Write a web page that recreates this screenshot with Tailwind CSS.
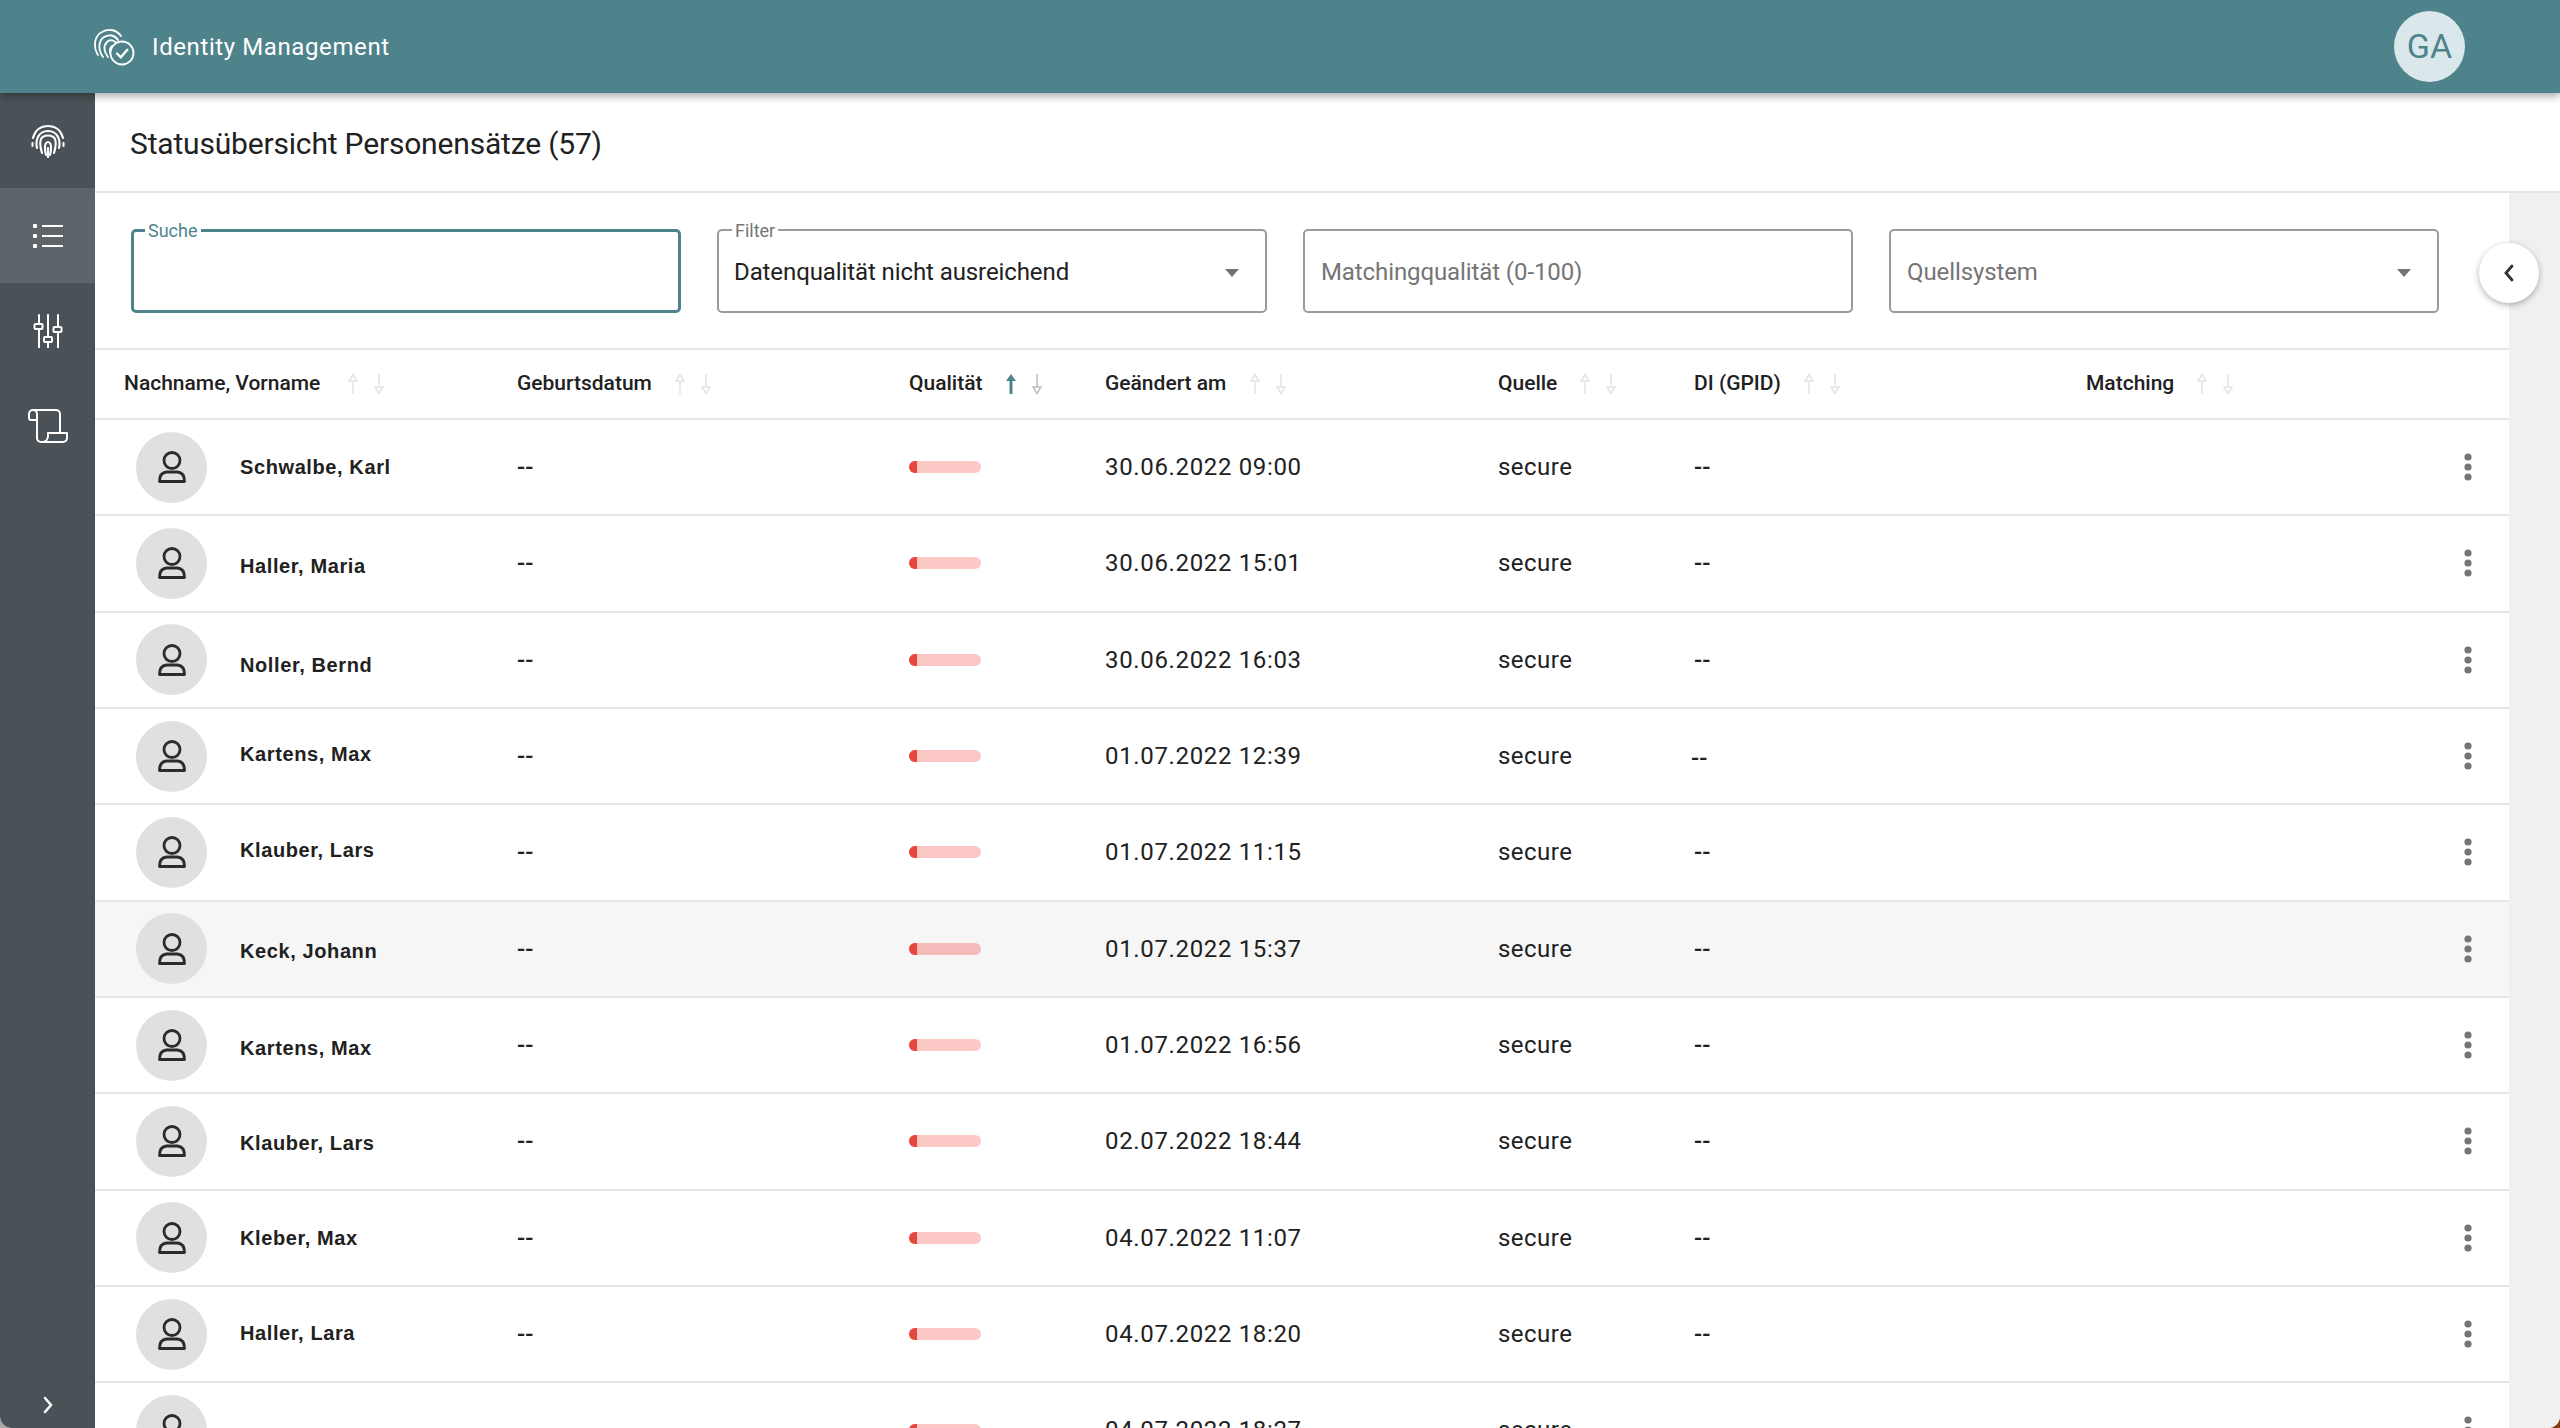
<!DOCTYPE html>
<html lang="de">
<head>
    <meta charset="UTF-8">
    <meta name="viewport" content="width=device-width, initial-scale=1.0">
    <title>Identity Management</title>
    <script src="https://cdn.jsdelivr.net/npm/@tailwindcss/browser@4"></script>
</head>
<body class="h-[1428px] w-[2560px] overflow-hidden bg-[linear-gradient(to_right,#a8a8a8_50%,#8a3a10_50%)] font-['Roboto',sans-serif] text-[#212121]">
<div class="h-[1428px] overflow-hidden rounded-b-[12px] bg-white">
    <!-- Top bar -->
    <header class="relative z-20 flex h-[93px] items-center justify-between bg-[#4f838c] pl-[93px] pr-[95px] shadow-[0_3px_8px_rgba(0,0,0,0.35)]">
        <div class="flex items-center gap-[15px]">
            <svg width="44" height="38" viewBox="0 0 44 38" fill="none" stroke="white" stroke-width="1.8" stroke-linecap="round">
                <path d="M5 27C0 19 1 8 9 4c7-4 15-2 19 4"/>
                <path d="M10 29C5 22 5 13 11 9c5-3 11-2 14 3"/>
                <path d="M15 29c-4-5-5-11-1-15 3-3 8-2 10 2"/>
                <path d="M20 29c-3-3-4-7-2-10 1-2 4-1 5 1"/>
                <circle cx="29" cy="25" r="11.5" fill="#4f838c"/>
                <path d="M24 25.5l3.8 3.8 6.5-7.5" stroke-width="2.4"/>
            </svg>
            <span class="text-[24px] leading-none tracking-[0.025em] text-white">Identity Management</span>
        </div>
        <div class="flex h-[71px] w-[71px] items-center justify-center rounded-full bg-[#dae8ec] text-[34px] text-[#4f838c]">GA</div>
    </header>

    <div class="flex h-[1335px]">
        <!-- Sidebar -->
        <nav class="relative flex w-[95px] shrink-0 flex-col bg-[#4b5257] text-white">
            <a class="flex h-[95px] items-center justify-center">
                <svg width="34" height="34" viewBox="0 0 34 34" fill="none" stroke="white" stroke-width="2.1" stroke-linecap="round">
                    <path d="M2 14C4 6 10 2 17 2s13 4 15 12"/>
                    <path d="M1.500 19v3M32.500 19v3"/>
                    <path d="M6 24c-1-4-1-7 1-11 2-4 6-6 10-6s8 2 10 6c2 4 2 7 1 11"/>
                    <path d="M11 29c-1.500-5-2.500-10-1-14 1-2 4-3.500 7-3.500s6 1.500 7 3.500c1.500 4 .5 9-1 14"/>
                    <path d="M15 31c-1-4-1.500-8-.5-11 .5-1 1.500-2 2.500-2s2 1 2.500 2c1 3 .5 7-.5 11"/>
                    <path d="M17 33V24"/>
                </svg>
            </a>
            <a class="flex h-[95px] items-center justify-center bg-[#5e656a]">
                <svg width="32" height="26" viewBox="0 0 32 26" fill="none" stroke="white" stroke-width="2">
                    <rect x="1" y="1" width="4" height="4" rx="1" fill="white" stroke="none"/>
                    <rect x="1" y="11" width="4" height="4" rx="1" fill="white" stroke="none"/>
                    <rect x="1" y="21" width="4" height="4" rx="1" fill="white" stroke="none"/>
                    <path d="M10 3h21M10 13h21M10 23h21"/>
                </svg>
            </a>
            <a class="flex h-[95px] items-center justify-center">
                <svg width="30" height="34" viewBox="0 0 30 34" fill="none" stroke="white" stroke-width="2" stroke-linecap="round">
                    <path d="M6 1v33M15 1v33M25 1v33" />
                    <rect x="1.500" y="10" width="8" height="5" rx="1" fill="#4b5257"/>
                    <rect x="11" y="23" width="8" height="5" rx="1" fill="#4b5257"/>
                    <rect x="20.500" y="13" width="8" height="5" rx="1" fill="#4b5257"/>
                </svg>
            </a>
            <a class="flex h-[95px] items-center justify-center">
                <svg width="40" height="34" viewBox="0 0 40 34" fill="none" stroke="white" stroke-width="2" stroke-linejoin="round">
                    <path d="M10 11H3a2 2 0 0 1-2-2V5a4 4 0 0 1 4-4h23a4 4 0 0 1 4 4v19"/>
                    <path d="M5 1a4 4 0 0 1 4 4v24a4 4 0 0 0 4 4h22a4 4 0 0 0 4-4v-5H20v3a6 6 0 0 1-5 6"/>
                </svg>
            </a>
            <svg class="absolute bottom-[14px] left-[43px]" width="10" height="18" viewBox="0 0 10 18" fill="none" stroke="white" stroke-width="2.5" stroke-linecap="round">
                <path d="M2 2l6 7-6 7"/>
            </svg>
        </nav>

        <main class="min-w-0 flex-1">
            <div class="flex h-[100px] items-center border-b-2 border-[#e6e6e6] pl-[35px] pt-[4px]">
                <h1 class="text-[30px] leading-none tracking-[-0.006em]">Statusübersicht Personensätze (57)</h1>
            </div>

            <div class="flex h-[1235px]">
                <div class="min-w-0 flex-1">
                    <!-- Filters -->
                    <div class="flex h-[157px] items-start gap-[36px] border-b-2 border-[#e6e6e6] pl-[36px] pr-[70px] pt-[36px]">
                        <div class="relative h-[84px] w-[550.25px] rounded-[5px] border-[3px] border-[#4f838c]">
                            <span class="absolute left-[11px] top-[-11px] bg-white px-[3px] text-[18px] leading-[20px] text-[#4f838c]">Suche</span>
                        </div>
                        <div class="relative flex h-[84px] w-[550.25px] items-center justify-between rounded-[5px] border-2 border-[#9b9b9b] pl-[15px] pr-[26px]">
                            <span class="absolute left-[13px] top-[-10px] bg-white px-[3px] text-[18px] leading-[20px] text-[#757575]">Filter</span>
                            <span class="pt-[1px] text-[24px] tracking-[-0.004em]">Datenqualität nicht ausreichend</span>
                            <span class="mt-[3px] h-0 w-0 border-x-[7px] border-t-[8px] border-x-transparent border-t-[#757575]"></span>
                        </div>
                        <div class="flex h-[84px] w-[550.25px] items-center rounded-[5px] border-2 border-[#9b9b9b] pl-[16px]">
                            <span class="pt-[1px] text-[24px] tracking-[-0.004em] text-[#757575]">Matchingqualität (0-100)</span>
                        </div>
                        <div class="flex h-[84px] w-[550.25px] items-center justify-between rounded-[5px] border-2 border-[#9b9b9b] pl-[16px] pr-[26px]">
                            <span class="pt-[1px] text-[24px] tracking-[-0.004em] text-[#757575]">Quellsystem</span>
                            <span class="mt-[3px] h-0 w-0 border-x-[7px] border-t-[8px] border-x-transparent border-t-[#757575]"></span>
                        </div>
                    </div>

                    <!-- Table -->
                    <div id="table"></div>
                </div>

                <aside class="relative w-[51px] shrink-0 bg-[#f0f0f0]">
                    <button class="absolute left-[-30px] top-[50px] flex h-[60px] w-[60px] items-center justify-center rounded-full bg-white shadow-[0_2px_6px_rgba(0,0,0,0.3)]">
                        <svg width="12" height="20" viewBox="0 0 12 20" fill="none" stroke="#333" stroke-width="2.800" stroke-linecap="round"><path d="M9 3l-6 7 6 7"/></svg>
                    </button>
                </aside>
            </div>
        </main>
    </div>
</div>

    <script>
        const columns = [
            ['Nachname, Vorname', 'w-[393px]', false, 'ml-[27px]'],
            ['Geburtsdatum', 'w-[392px]', false, 'ml-[22px]'],
            ['Qualität', 'w-[196px]', true, 'ml-[23px]'],
            ['Geändert am', 'w-[393px]', false, 'ml-[23px]'],
            ['Quelle', 'w-[196px]', false, 'ml-[22px]'],
            ['DI (GPID)', 'w-[392px]', false, 'ml-[22px]'],
            ['Matching', 'flex-1', false, 'ml-[22px]']
        ];

        // name, vertical nudge of the name, date
        const rows = [
            ['Schwalbe, Karl', 'mt-0', '30.06.2022 09:00'],
            ['Haller, Maria', 'mt-[6px]', '30.06.2022 15:01'],
            ['Noller, Bernd', 'mt-[10px]', '30.06.2022 16:03'],
            ['Kartens, Max', 'mt-[-4px]', '01.07.2022 12:39'],
            ['Klauber, Lars', 'mt-[-4px]', '01.07.2022 11:15'],
            ['Keck, Johann', 'mt-[4px]', '01.07.2022 15:37'],
            ['Kartens, Max', 'mt-[6px]', '01.07.2022 16:56'],
            ['Klauber, Lars', 'mt-[4px]', '02.07.2022 18:44'],
            ['Kleber, Max', 'mt-0', '04.07.2022 11:07'],
            ['Haller, Lara', 'mt-[-2px]', '04.07.2022 18:20'],
            ['', 'mt-0', '04.07.2022 18:27']
        ];

        function sortIcon(active, gap) {
            const up = active ? '#4f838c' : '#e4e4e4';
            const down = active ? '#bdbdbd' : '#e4e4e4';
            const upShape = active
                ? `<path d="M6 1L1 8h3.500v13h3V8H11z" fill="${up}"/>`
                : `<path d="M6 1.500L2 8h8zM6 8v13" fill="none" stroke="${up}" stroke-width="1.500"/>`;
            return `<span class="${gap} flex items-center gap-[14px]">
                <svg width="12" height="22" viewBox="0 0 12 22">${upShape}</svg>
                <svg width="12" height="22" viewBox="0 0 12 22"><path d="M6 1v13M2 14h8L6 20.500z" fill="none" stroke="${down}" stroke-width="1.500"/></svg>
            </span>`;
        }

        const personIcon = `<svg width="28" height="32" viewBox="0 0 28 32" fill="none" stroke="#2b2b2b" stroke-width="2.800">
            <circle cx="14" cy="9.500" r="8"/>
            <path d="M1.500 30.500c0-5 2-9 7-9.500h11c5 .5 7 4.500 7 9.500z" stroke-linejoin="round"/>
        </svg>`;

        let html = '<div class="flex h-[70px] items-center border-b-2 border-[#e6e6e6] pl-[29px]">';
        columns.forEach(([label, width, active, gap]) => {
            html += `<div class="flex items-center ${width}"><span class="text-[21px] font-medium">${label}</span>${sortIcon(active, gap)}</div>`;
        });
        html += '</div>';

        rows.forEach(([name, nudge, date], i) => {
            const hovered = i === 5;
            html += `<div class="flex h-[96.33px] items-center border-b-2 border-[#e6e6e6] pl-[29px] ${hovered ? 'bg-[#f6f6f6]' : 'bg-white'}">
                <div class="flex w-[393px] items-center pl-[12px]">
                    <div class="flex h-[71px] w-[71px] shrink-0 items-center justify-center rounded-full bg-[#e0e0e0]">${personIcon}</div>
                    <span class="ml-[33px] font-['Liberation_Sans',sans-serif] text-[20px] font-bold tracking-[0.03em] ${nudge}">${name}</span>
                </div>
                <div class="w-[392px] text-[24px] font-medium">--</div>
                <div class="w-[196px]">
                    <div class="h-[12px] w-[72px] overflow-hidden rounded-full ${hovered ? 'bg-[#f5baba]' : 'bg-[#fcc8c5]'}"><div class="h-full w-[8px] bg-[#e8453c]"></div></div>
                </div>
                <div class="w-[393px] text-[24px] tracking-[0.027em]">${date}</div>
                <div class="w-[196px] text-[24px] tracking-[0.02em]">secure</div>
                <div class="w-[392px] text-[24px] font-medium ${i === 3 ? 'mt-[4px] ml-[-3px]' : 'ml-0'}">--</div>
                <div class="flex flex-1 justify-end pr-[36px]">
                    <svg width="10" height="28" viewBox="0 0 10 28" fill="#757575"><circle cx="5" cy="4" r="3.600"/><circle cx="5" cy="14" r="3.600"/><circle cx="5" cy="24" r="3.600"/></svg>
                </div>
            </div>`;
        });
        document.getElementById('table').innerHTML = html;
    </script>
</body>
</html>
